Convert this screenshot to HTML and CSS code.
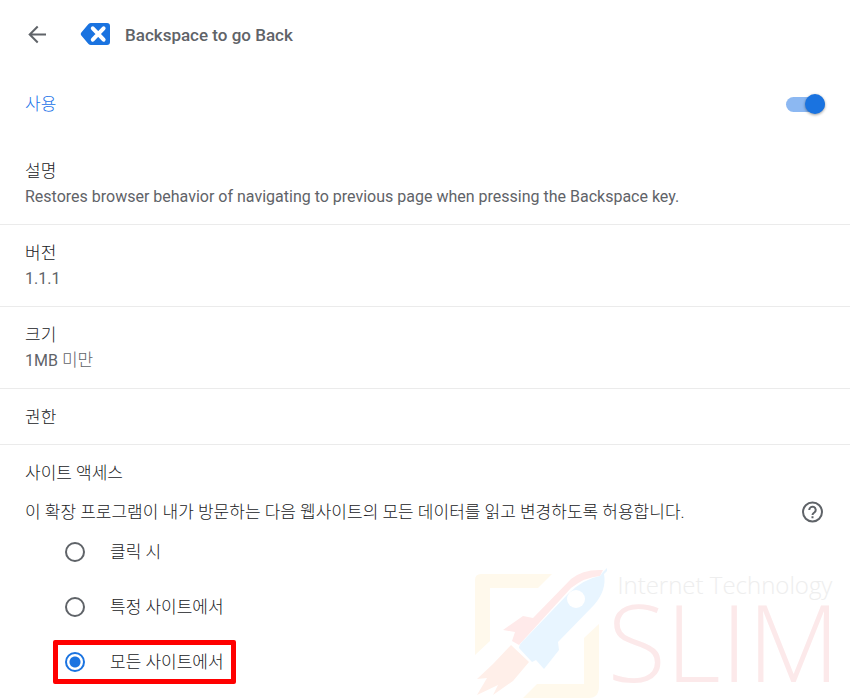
FILE: index.html
```html
<!DOCTYPE html>
<html lang="ko">
<head>
<meta charset="utf-8">
<title>Backspace to go Back</title>
<link rel="stylesheet" href="styles.css">
</head>
<body>
<main class="page">
  <header class="header">
    <button class="back" type="button" aria-label="뒤로">
      <svg width="24" height="24" viewBox="0 0 24 24" fill="none" stroke="currentColor" stroke-width="2"><path d="M21 11.500H5M12.700 3.500l-8 8 8 8"/></svg>
    </button>
    <svg class="logo" width="30" height="24" viewBox="0 0 30 24" aria-hidden="true">
      <path d="M11 0h16a3 3 0 0 1 3 3v16a3 3 0 0 1-3 3H11q-1.500 0-2.500-1L1.300 12.500q-1.300-1.500 0-3L8.500 1Q9.500 0 11 0z" fill="#1a73e0"/>
      <path d="M12.800 5.300l10.800 11.400M23.600 5.300L12.800 16.700" stroke="#fff" stroke-width="4" stroke-linecap="round"/>
    </svg>
    <h1 class="title">Backspace to go Back</h1>
  </header>

  <div class="enable">
    <label for="enabled">사용</label>
    <input class="toggle" id="enabled" type="checkbox" role="switch" checked>
  </div>

  <section class="row">
    <h2 class="name">설명</h2>
    <p class="value">Restores browser behavior of navigating to previous page when pressing the Backspace key.</p>
  </section>
  <section class="row">
    <h2 class="name">버전</h2>
    <p class="value">1.1.1</p>
  </section>
  <section class="row">
    <h2 class="name">크기</h2>
    <p class="value">1MB <span class="hangul">미만</span></p>
  </section>
  <section class="row">
    <h2 class="name">권한</h2>
  </section>
  <section class="row">
    <h2 class="name">사이트 액세스</h2>
    <div class="access">
      <p>이 확장 프로그램이 내가 방문하는 다음 웹사이트의 모든 데이터를 읽고 변경하도록 허용합니다.</p>
      <button class="help" type="button" aria-label="도움말">
        <svg width="24" height="22" viewBox="0 0 24 22" fill="none" stroke="currentColor" stroke-width="2"><circle cx="11.500" cy="11" r="9.500"/><path d="M8.300 9a3.200 3.200 0 1 1 5.300 2.300C12.500 12.200 11.500 12.600 11.500 14M11.500 15.200v2"/></svg>
      </button>
    </div>
    <div class="options">
      <label class="option"><input class="radio" type="radio" name="site">클릭 시</label>
      <label class="option"><input class="radio" type="radio" name="site">특정 사이트에서</label>
      <label class="option marked"><input class="radio" type="radio" name="site" checked>모든 사이트에서</label>
    </div>
  </section>

  <div class="watermark">
    <svg width="132" height="130" viewBox="0 0 132 130" aria-hidden="true">
      <path d="M0 87V12Q0 6 6 6H77L63 20H15V73z" fill="#fff9ec"/>
      <path d="M124 56V118Q124 130 114 130H48L62 116H109V70z" fill="#fff9ec"/>
      <path d="M28 62L48 48 58 50 96 11Q108 1 128 2L125 8Q110 9 96 20L44 77 37 73 40 64z" fill="#ffeaea"/>
      <path d="M132 0V3L129 6Q132 22 119 37L83 74 84 82 69 101 61 92 57 94 44 80Q44 76 50 71L93 26Q108 11 125 8L128 4z" fill="#e8f5ff"/>
      <path d="M36 77L54 94 38 113 18 127 23 117 2 127 12 110 2 111 18 96z" fill="#ffefe9"/>
      <circle cx="101" cy="31" r="9" fill="#fff"/>
    </svg>
    <div class="brand">
      <span class="tagline">Internet Technology</span>
      <span class="wordmark">SLIM</span>
    </div>
  </div>
</main>
</body>
</html>
```
FILE: styles.css
```css
* {
  box-sizing: border-box;
}

body {
  margin: 0;
  background: #fff;
  color: #202124;
  font: 16px/26px Roboto, "Noto Sans CJK KR", sans-serif;
}

h1, h2, p {
  margin: 0;
}

button {
  display: flex;
  padding: 0;
  border: 0;
  background: none;
  color: #5f6368;
}

.page {
  position: relative;
  overflow: hidden;
}

.header {
  display: flex;
  align-items: center;
  height: 70px;
  padding: 0 25px;
}

.logo {
  margin: 0 15px 0 31px;
}

.title {
  color: #5f6368;
  font-size: 17px;
  font-weight: 500;
}

.enable {
  display: flex;
  align-items: center;
  justify-content: space-between;
  height: 68px;
  padding: 0 25px;
  color: #1a73e8;
  font-size: 17px;
  font-weight: 300;
}

.toggle {
  appearance: none;
  display: flex;
  align-items: center;
  justify-content: flex-end;
  width: 39px;
  height: 15px;
  margin: 0;
  border-radius: 8px;
  background: #8cb8f2;
}

.toggle::before {
  content: "";
  flex: none;
  width: 20px;
  height: 20px;
  border-radius: 50%;
  background: #1a73e0;
  box-shadow: 0 1px 3px rgba(0, 0, 0, .4);
}

.row {
  padding: 15px 25px 14px;
  border-bottom: 1px solid #ebebeb;
}

.enable + .row {
  padding-top: 20px;
}

.row:last-of-type {
  border-bottom: 0;
}

.name,
.hangul {
  font-size: 17px;
  font-weight: 300;
}

.hangul {
  line-height: 1;
}

.value {
  color: #5f6368;
}

.access {
  display: flex;
  align-items: center;
  justify-content: space-between;
  padding-top: 13px;
  font-size: 17px;
  font-weight: 300;
}

.options {
  display: flex;
  flex-direction: column;
  align-items: flex-start;
  gap: 11px;
  padding: 5px 0 0 28px;
  font-size: 17px;
  font-weight: 300;
}

.option {
  display: flex;
  align-items: center;
  gap: 25px;
  height: 44px;
  padding: 0 7px;
  border: 5px solid transparent;
  border-radius: 2px;
}

.marked {
  border-color: #f00;
}

.radio {
  appearance: none;
  width: 20px;
  height: 20px;
  margin: 0;
  border: 2px solid #5f6368;
  border-radius: 50%;
}

.radio:checked {
  border-color: #1a73e0;
  background: radial-gradient(circle, #1a73e0 5px, transparent 6px);
}

.watermark {
  position: absolute;
  right: 10px;
  bottom: 0;
  display: flex;
  pointer-events: none;
}

.brand {
  display: flex;
  flex-direction: column;
  font-family: "Open Sans", sans-serif;
  font-weight: 300;
}

.tagline {
  padding-left: 10px;
  color: #eee;
  font-size: 24px;
  line-height: 34px;
}

.wordmark {
  color: #fce9ea;
  font-size: 107px;
  line-height: 78px;
}
```
